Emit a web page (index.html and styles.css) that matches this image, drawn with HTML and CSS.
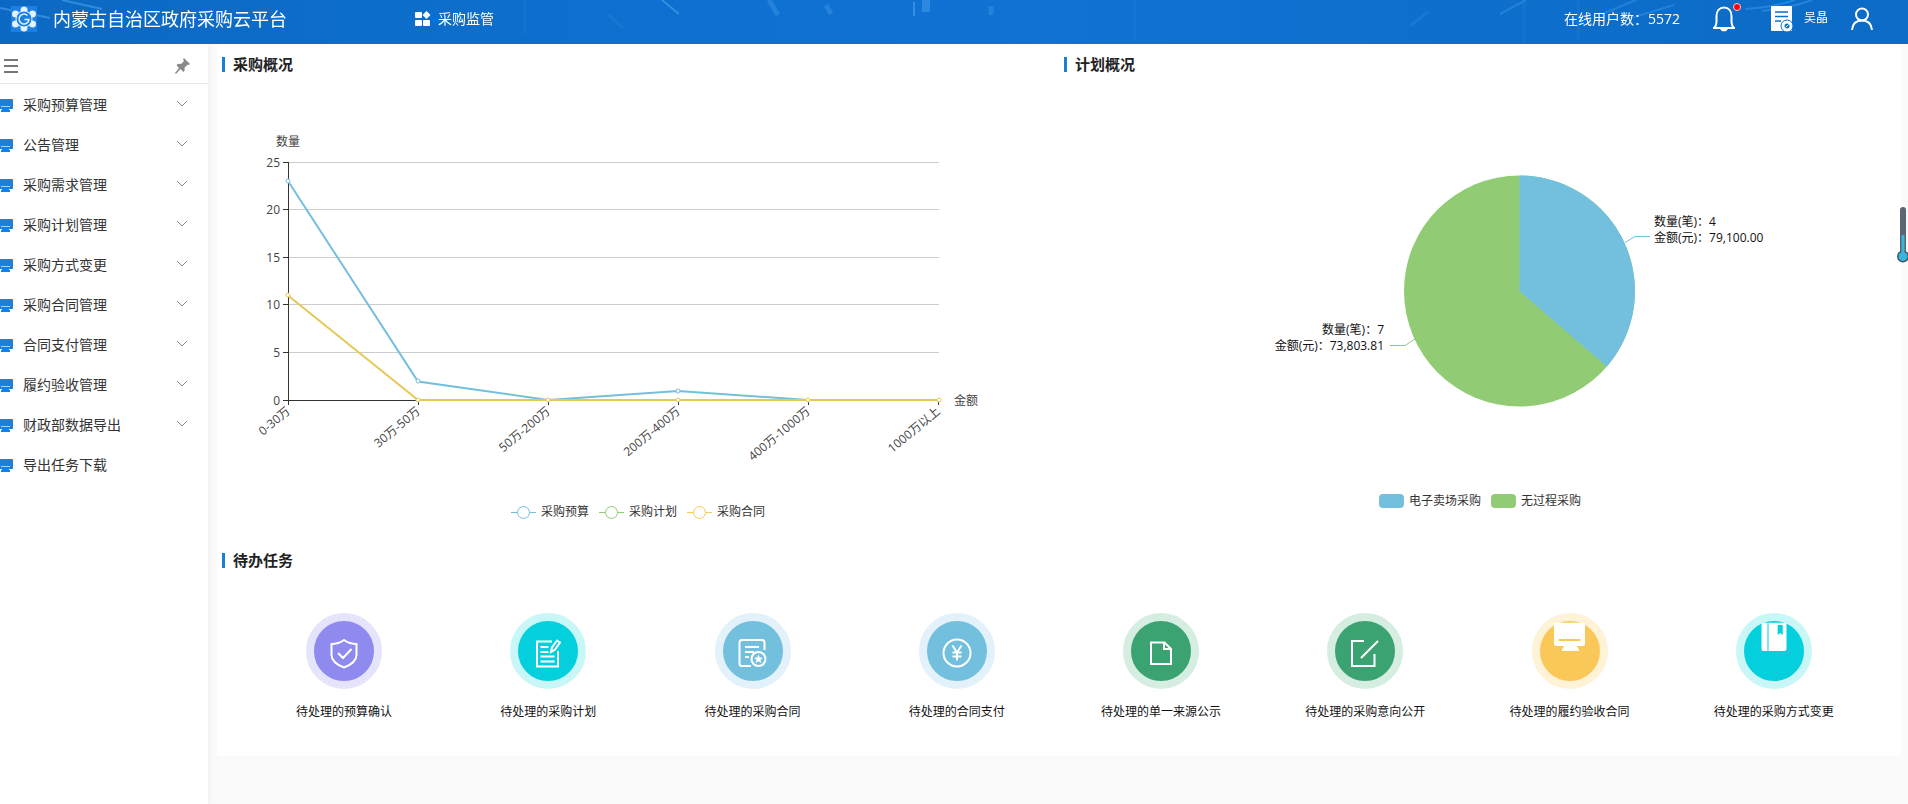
FILE: index.html
```html
<!DOCTYPE html>
<html lang="zh-CN">
<head>
<meta charset="utf-8">
<title>内蒙古自治区政府采购云平台</title>
<link rel="stylesheet" href="styles.css">
</head>
<body>
<svg class="sprite" aria-hidden="true">
  <symbol id="monitor" viewBox="0 0 16 13">
    <path d="M1 0h14a1 1 0 0 1 1 1v8a1 1 0 0 1-1 1h-3v1h1v2H4v-2h1v-1H1a1 1 0 0 1-1-1V1a1 1 0 0 1 1-1z" fill="#1482e0"/>
    <path d="M4 7.500h9" stroke="#a9d3f8"/>
  </symbol>
  <symbol id="down" viewBox="0 0 12 7"><path d="M1 1l5 5 5-5" fill="none" stroke="#8c8c8c"/></symbol>
</svg>

<header class="topbar">
  <svg class="topbar-art" viewBox="0 0 1908 44" preserveAspectRatio="none" aria-hidden="true">
    <g stroke="#4da3ee" fill="none" opacity=".6">
      <path d="M0 8l50 10M62 0l40 9" stroke-width="2"/>
      <path d="M662 0l17 14" stroke-width="2"/>
      <path d="M769 0l9 15M826 5l5 9M991 6v9" stroke-width="5" opacity=".6"/>
      <path d="M926 0v12" stroke-width="8" opacity=".8"/>
      <path d="M914 2v14" stroke-width="2"/>
      <path d="M1500 14l26-14M1602 14l34-14M1624 20l50-15" stroke-width="2" opacity=".6"/>
      <path d="M1745 9q30-2 50-9M1762 11q28-3 50-11" stroke-width="2" opacity=".7"/>
      <path d="M608 14l15 14M1410 26l18-14" stroke-width="3" opacity=".3"/>
      <path d="M525 0v34M1135 0v40M1524 0v42M1578 0v40" stroke-width="3" opacity=".2"/>
    </g>
  </svg>
  <div class="brand">
    <svg class="logo" viewBox="0 0 26 26" aria-hidden="true">
      <rect width="26" height="26" fill="#1c80e2"/>
      <g fill="#e4f1ff">
        <circle cx="13" cy="4" r="3.500"/><circle cx="13" cy="22" r="3.500"/>
        <circle cx="4.500" cy="8" r="3.500"/><circle cx="21.500" cy="8" r="3.500"/>
        <circle cx="4.500" cy="18" r="3.500"/><circle cx="21.500" cy="18" r="3.500"/>
      </g>
      <circle cx="13" cy="13" r="8" fill="#1c80e2" stroke="#e4f1ff"/>
      <path d="M16.500 9.500a5 5 0 1 0 1.500 4h-4.500" fill="none" stroke="#e4f1ff" stroke-width="1.500"/>
    </svg>
    <h1 class="brand-name">内蒙古自治区政府采购云平台</h1>
  </div>
  <nav class="topnav">
    <a class="topnav-link" href="#">
      <svg class="topnav-icon" viewBox="0 0 16 16" fill="#fff" aria-hidden="true"><rect y="1" width="7" height="6" rx="1"/><rect y="9" width="7" height="6" rx="1"/><rect x="8" y="9" width="7" height="6" rx="1"/><path d="M11.500 0l4 4-4 4-4-4z"/></svg>
      采购监管
    </a>
  </nav>
  <div class="tools">
    <span class="online">在线用户数：5572</span>
    <button class="tool bell" type="button" aria-label="消息">
      <svg width="22" height="26" viewBox="0 0 22 26" fill="none" stroke="#fff" stroke-width="2" aria-hidden="true"><path d="M1 22h20c-2-2-2.500-4-2.500-6v-6c0-5-3-8.500-7.500-8.500S3.500 5 3.500 10v6c0 2-.5 4-2.500 6zM8 22c.5 3 5.500 3 6 0"/></svg>
      <span class="dot"></span>
    </button>
    <button class="tool" type="button" aria-label="单据">
      <svg width="22" height="26" viewBox="0 0 22 26" aria-hidden="true"><path d="M1 0h19a1 1 0 0 1 1 1v24H1a1 1 0 0 1-1-1V1a1 1 0 0 1 1-1z" fill="#fff"/><path d="M4 6h13M4 10.500h13M4 15h6" stroke="#0c6dc9" stroke-width="1.500"/><circle cx="16" cy="20" r="6" fill="#fff" stroke="#0c6dc9"/><circle cx="16" cy="20" r="2.500" fill="#0c6dc9"/><path d="M14.500 21.500l3-3" stroke="#fff"/></svg>
    </button>
    <span class="user-name">吴晶</span>
    <button class="tool user" type="button" aria-label="个人中心">
      <svg width="22" height="24" viewBox="0 0 22 24" fill="none" stroke="#fff" stroke-width="2" aria-hidden="true"><circle cx="11" cy="7.500" r="6"/><path d="M1 23c.5-6 4-9.500 10-9.500S20.500 17 21 23"/></svg>
    </button>
  </div>
</header>

<div class="body">
  <aside class="sidebar">
    <div class="sidebar-head">
      <button class="plain" type="button" aria-label="折叠菜单"><svg width="14" height="14" viewBox="0 0 14 14" stroke="#777" stroke-width="2" aria-hidden="true"><path d="M0 1h14M0 7h14M0 13h14"/></svg></button>
      <button class="plain" type="button" aria-label="固定菜单"><svg width="15" height="16" viewBox="0 0 15 16" fill="#8a8a8a" aria-hidden="true"><path d="M9 0l6 6-1.500 1-1-.3-3 3 .2 2.800L8.300 14 5.500 11 1 16 0 15l4-5L1.500 7.200 3 5.800l3 .2 3-3L8 1.500z"/></svg></button>
    </div>
    <ul class="menu">
      <li><button class="menu-item" type="button"><svg class="menu-icon"><use href="#monitor"/></svg>采购预算管理<svg class="menu-arrow"><use href="#down"/></svg></button></li>
      <li><button class="menu-item" type="button"><svg class="menu-icon"><use href="#monitor"/></svg>公告管理<svg class="menu-arrow"><use href="#down"/></svg></button></li>
      <li><button class="menu-item" type="button"><svg class="menu-icon"><use href="#monitor"/></svg>采购需求管理<svg class="menu-arrow"><use href="#down"/></svg></button></li>
      <li><button class="menu-item" type="button"><svg class="menu-icon"><use href="#monitor"/></svg>采购计划管理<svg class="menu-arrow"><use href="#down"/></svg></button></li>
      <li><button class="menu-item" type="button"><svg class="menu-icon"><use href="#monitor"/></svg>采购方式变更<svg class="menu-arrow"><use href="#down"/></svg></button></li>
      <li><button class="menu-item" type="button"><svg class="menu-icon"><use href="#monitor"/></svg>采购合同管理<svg class="menu-arrow"><use href="#down"/></svg></button></li>
      <li><button class="menu-item" type="button"><svg class="menu-icon"><use href="#monitor"/></svg>合同支付管理<svg class="menu-arrow"><use href="#down"/></svg></button></li>
      <li><button class="menu-item" type="button"><svg class="menu-icon"><use href="#monitor"/></svg>履约验收管理<svg class="menu-arrow"><use href="#down"/></svg></button></li>
      <li><button class="menu-item" type="button"><svg class="menu-icon"><use href="#monitor"/></svg>财政部数据导出<svg class="menu-arrow"><use href="#down"/></svg></button></li>
      <li><button class="menu-item" type="button"><svg class="menu-icon"><use href="#monitor"/></svg>导出任务下载</button></li>
    </ul>
  </aside>

  <main class="main">
    <div class="panel">
      <div class="charts">
        <section class="card">
          <h2 class="card-title">采购概况</h2>
          <svg class="chart" viewBox="0 0 842 428" role="img" aria-label="采购概况折线图">
            <path d="M72 90.500h650M72 137.500h650M72 185.500h650M72 232.500h650M72 280.500h650" stroke="#ccc"/>
            <path d="M71.500 90v239M66 90.500h5M66 137.500h5M66 185.500h5M66 232.500h5M66 280.500h5M66 328.500h656M71.500 328v5M201.500 328v5M331.500 328v5M461.500 328v5M591.500 328v5M721.500 328v5" stroke="#333" fill="none"/>
            <g class="label" text-anchor="end">
              <text x="63" y="95">25</text><text x="63" y="142">20</text><text x="63" y="190">15</text><text x="63" y="237">10</text><text x="63" y="285">5</text><text x="63" y="333">0</text>
            </g>
            <text class="label" x="71" y="74" text-anchor="middle">数量</text>
            <text class="label" x="737" y="333">金额</text>
            <g class="label" text-anchor="end" dominant-baseline="central">
              <text transform="translate(71 337) rotate(-40)">0-30万</text>
              <text transform="translate(201 337) rotate(-40)">30万-50万</text>
              <text transform="translate(331 337) rotate(-40)">50万-200万</text>
              <text transform="translate(461 337) rotate(-40)">200万-400万</text>
              <text transform="translate(591 337) rotate(-40)">400万-1000万</text>
              <text transform="translate(721 337) rotate(-40)">1000万以上</text>
            </g>
            <path d="M71 109l130 200.500 130 18.500 130-9 130 9" stroke="#73c0de" stroke-width="2" fill="none"/>
            <g fill="#fff" stroke="#73c0de"><circle cx="71" cy="109" r="2"/><circle cx="201" cy="309" r="2"/><circle cx="461" cy="319" r="2"/></g>
            <path d="M71 223.500l130 104.500h521" stroke="#e6c855" stroke-width="2" fill="none"/>
            <g fill="#fff" stroke="#e6c855"><circle cx="71" cy="223" r="2"/><circle cx="201" cy="328" r="2"/><circle cx="331" cy="328" r="2"/><circle cx="461" cy="328" r="2"/><circle cx="591" cy="328" r="2"/><circle cx="722" cy="328" r="2"/></g>
          </svg>
          <ul class="legend">
            <li class="legend-item"><svg class="legend-line" viewBox="0 0 25 14" fill="#fff" stroke="#73c0de"><path d="M0 7.500h25"/><circle cx="12.500" cy="7.500" r="6"/></svg>采购预算</li>
            <li class="legend-item"><svg class="legend-line" viewBox="0 0 25 14" fill="#fff" stroke="#91cc75"><path d="M0 7.500h25"/><circle cx="12.500" cy="7.500" r="6"/></svg>采购计划</li>
            <li class="legend-item"><svg class="legend-line" viewBox="0 0 25 14" fill="#fff" stroke="#fac858"><path d="M0 7.500h25"/><circle cx="12.500" cy="7.500" r="6"/></svg>采购合同</li>
          </ul>
        </section>
        <section class="card">
          <h2 class="card-title">计划概况</h2>
          <svg class="chart" viewBox="0 0 842 417" role="img" aria-label="计划概况饼图">
            <circle cx="460.500" cy="219" r="115.500" fill="#91cc75"/>
            <path d="M460.500 219V103.500A115.500 115.500 0 0 1 547.800 294.600z" fill="#73c0de"/>
            <path d="M566 170.500l10-6h15" stroke="#73c0de" fill="none"/>
            <path d="M356 267l-10 6.500h-15" stroke="#91cc75" fill="none"/>
            <g class="pie-label"><text x="595" y="154">数量(笔)：4</text><text x="595" y="170">金额(元)：79,100.00</text></g>
            <g class="pie-label" text-anchor="end"><text x="325" y="262">数量(笔)：7</text><text x="325" y="278">金额(元)：73,803.81</text></g>
          </svg>
          <ul class="legend">
            <li class="legend-item"><span class="swatch swatch-blue"></span>电子卖场采购</li>
            <li class="legend-item"><span class="swatch swatch-green"></span>无过程采购</li>
          </ul>
        </section>
      </div>

      <section class="card">
        <h2 class="card-title">待办任务</h2>
        <div class="tasks">
          <a class="task" href="#"><span class="badge purple"><svg viewBox="0 0 76 76"><path d="M38 27c4 3 8 4 12.500 4v11c0 6-6 10-12.500 12.500C31.500 52 25.500 48 25.500 42V31C30 31 34 30 38 27zM32 40l5 5 8.500-9"/></svg></span>待处理的预算确认</a>
          <a class="task" href="#"><span class="badge cyan"><svg viewBox="0 0 76 76"><path d="M42 28.500H27v25h21V38M30.500 34h8M30.500 39h8M30.500 43.500h14M30.500 48.500h14"/><path d="M41 39l1-4.500 5-7 3 2-5 7z"/></svg></span>待处理的采购计划</a>
          <a class="task" href="#"><span class="badge blue"><svg viewBox="0 0 76 76"><path d="M36 53H27q-2.500 0-2.500-2.500V29.500Q24.500 27 27 27h20q2.500 0 2.500 2.500V37M30 34h14M30 39h9M30 44h4"/><circle cx="43.500" cy="46" r="7"/><path class="solid" d="M43.500 41.500l1.300 3 3.200.2-2.500 2.100.9 3.200-2.900-1.800-2.900 1.800.9-3.200-2.500-2.100 3.200-.2z"/></svg></span>待处理的采购合同</a>
          <a class="task" href="#"><span class="badge blue"><svg viewBox="0 0 76 76"><circle cx="38" cy="40" r="13.500"/><path d="M33.500 32.500l4.500 7 4.500-7M38 39.500v8M33.500 39.500h9M33.500 43.500h9"/></svg></span>待处理的合同支付</a>
          <a class="task" href="#"><span class="badge green"><svg viewBox="0 0 76 76"><path d="M28 29.500h13.500l6.500 6.500v15H28zM41 30v6h7"/></svg></span>待处理的单一来源公示</a>
          <a class="task" href="#"><span class="badge green"><svg viewBox="0 0 76 76"><path d="M37 28H25v25h22.500V41M51 28L34 45"/></svg></span>待处理的采购意向公开</a>
          <a class="task" href="#"><span class="badge yellow"><svg viewBox="0 0 76 76"><path class="solid" d="M24 9.700h27a2 2 0 0 1 2 2V31a2 2 0 0 1-2 2h-6l2.500 5h-18l2.500-5h-8a2 2 0 0 1-2-2V11.700a2 2 0 0 1 2-2z"/><path class="cut" d="M26.500 27h22"/></svg></span>待处理的履约验收合同</a>
          <a class="task" href="#"><span class="badge cyan"><svg viewBox="0 0 76 76"><rect class="solid" x="25.500" y="9.700" width="25" height="28.300" rx="2"/><path class="cut" d="M32 10v28"/><path d="M41.700 12h5v10l-2.500-2-2.500 2z" fill="#04cfdd" stroke="none"/></svg></span>待处理的采购方式变更</a>
        </div>
      </section>
    </div>
  </main>
</div>

<svg class="gauge" viewBox="0 0 12 56" aria-hidden="true">
  <rect x="3" width="6" height="48" rx="3" fill="#5a6672"/>
  <circle cx="6" cy="49.500" r="6" fill="#43525f"/>
  <circle cx="6" cy="49.500" r="4.500" fill="#38b6df"/>
  <path d="M6 28v20" stroke="#38b6df" stroke-width="3"/>
</svg>
</body>
</html>
```
FILE: styles.css
```css
* { box-sizing: border-box; }

body {
  margin: 0;
  min-height: 100vh;
  display: flex;
  flex-direction: column;
  overflow-x: hidden;
  background: #fafafa;
  color: #222;
  font: 12px/18px "Open Sans", "Noto Sans CJK SC", sans-serif;
}

h1, h2, ul { margin: 0; padding: 0; font-weight: 400; }
ul { list-style: none; }
a { color: inherit; text-decoration: none; }
button { font: inherit; color: inherit; border: 0; padding: 0; background: none; cursor: pointer; }
svg { display: block; flex: none; }
.sprite { position: absolute; width: 0; height: 0; }

.topbar {
  position: relative;
  display: flex;
  align-items: center;
  height: 44px;
  padding: 0 35px 6px 11px;
  color: #fff;
  background: linear-gradient(90deg, #0c69c3, #0d6fce 30%, #1072d2 55%, #0b6bc6);
}
.topbar-art { position: absolute; inset: 0; width: 100%; height: 100%; }
.brand { position: relative; display: flex; align-items: center; gap: 16px; }
.logo { width: 26px; height: 26px; }
.brand-name { font-size: 18px; line-height: 26px; }
.topnav { position: relative; margin-left: 128px; }
.topnav-link { display: flex; align-items: center; gap: 7px; font-size: 14px; }
.topnav-icon { width: 16px; height: 16px; }
.tools { position: relative; display: flex; align-items: center; margin-left: auto; }
.online { margin-right: 33px; font-size: 14px; }
.tool { display: block; }
.bell { position: relative; margin-right: 36px; }
.dot { position: absolute; top: -3px; right: -6px; width: 8px; height: 8px; border: 1px solid #f8c8c8; border-radius: 50%; background: #f00; }
.user-name { margin: 0 23px 0 11px; padding-bottom: 2px; }

.body { display: flex; flex: 1; }
.sidebar { width: 208px; flex: none; background: #fff; box-shadow: 1px 0 6px rgba(0, 0, 0, .06); }
.sidebar-head { display: flex; align-items: center; justify-content: space-between; height: 40px; padding: 4px 18px 0 4px; border-bottom: 1px solid #e8e8e8; }
.plain { display: block; }
.menu { padding-top: 1px; }
.menu-item { display: flex; align-items: center; width: 100%; height: 40px; padding-right: 20px; color: #333; font-size: 14px; line-height: 20px; text-align: left; }
.menu-icon { width: 16px; height: 13px; margin: 0 10px 0 -3px; }
.menu-arrow { width: 12px; height: 7px; margin: 0 0 4px auto; }

.main { flex: 1; min-width: 0; padding: 0 7px 0 9px; }
.panel { background: #fff; }
.charts { display: grid; grid-template-columns: 1fr 1fr; }
.card { padding-top: 13px; }
.charts .card { padding-bottom: 16px; }
.card-title { margin-left: 5px; padding-left: 8px; border-left: 3px solid #1a7fd4; font-size: 15px; font-weight: 600; line-height: 15px; }
.chart { width: 100%; height: auto; }
.label { fill: #444; }
.pie-label { fill: #111; }
.legend { display: flex; justify-content: center; gap: 10px; line-height: 24px; color: #333; }
.legend-item { display: flex; align-items: center; gap: 5px; }
.legend-line { width: 25px; height: 14px; }
.swatch { width: 25px; height: 14px; border-radius: 4px; }
.swatch-blue { background: #73c0de; }
.swatch-green { background: #91cc75; }

.tasks { display: grid; grid-template-columns: repeat(8, 1fr); padding: 45px 25px 35px; }
.task { display: flex; flex-direction: column; align-items: center; gap: 14px; color: #111; }
.badge { width: 76px; height: 76px; border: 8px solid; border-radius: 50%; }
.badge svg { width: 76px; height: 76px; margin: -8px; fill: none; stroke: #fff; stroke-width: 2; }
.badge .solid { fill: #fff; stroke: none; }
.purple { background: #8f8aed; border-color: #e6e4fb; }
.cyan { background: #04cfdd; border-color: #c9f7f7; }
.blue { background: #73c0de; border-color: #e2f1fa; }
.green { background: #3ba272; border-color: #d5eee1; }
.yellow { background: #fac858; border-color: #fef2d7; }
.yellow .cut { stroke: #fac858; }
.cyan .cut { stroke: #04cfdd; stroke-width: 1; }

.gauge { position: fixed; top: 207px; right: -1px; width: 12px; height: 56px; }
```
